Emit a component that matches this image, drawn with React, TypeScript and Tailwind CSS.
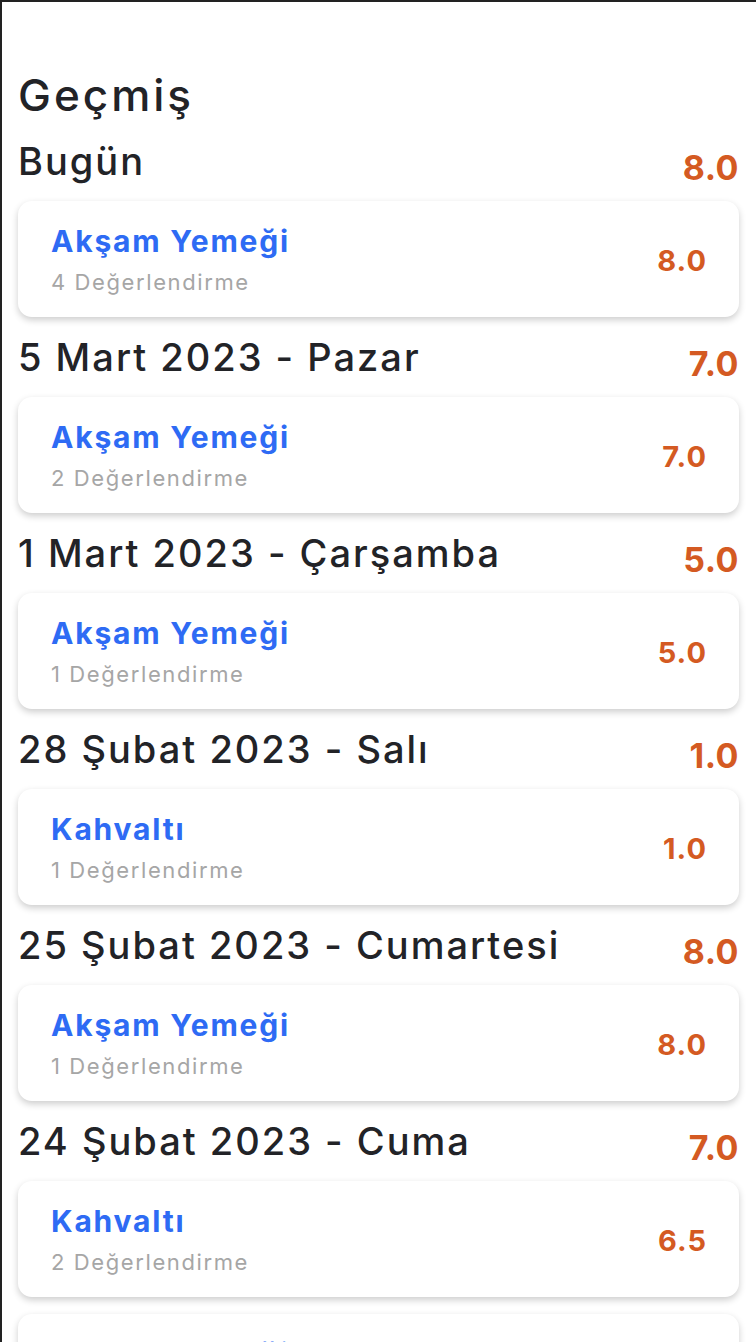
type Meal = { name: string; count: number; score: string };

const days: { date: string; avg: string; meals: Meal[] }[] = [
  { date: "Bugün", avg: "8.0", meals: [{ name: "Akşam Yemeği", count: 4, score: "8.0" }] },
  { date: "5 Mart 2023 - Pazar", avg: "7.0", meals: [{ name: "Akşam Yemeği", count: 2, score: "7.0" }] },
  { date: "1 Mart 2023 - Çarşamba", avg: "5.0", meals: [{ name: "Akşam Yemeği", count: 1, score: "5.0" }] },
  { date: "28 Şubat 2023 - Salı", avg: "1.0", meals: [{ name: "Kahvaltı", count: 1, score: "1.0" }] },
  { date: "25 Şubat 2023 - Cumartesi", avg: "8.0", meals: [{ name: "Akşam Yemeği", count: 1, score: "8.0" }] },
  {
    date: "24 Şubat 2023 - Cuma",
    avg: "7.0",
    meals: [
      { name: "Kahvaltı", count: 2, score: "6.5" },
      { name: "Akşam Yemeği", count: 1, score: "7.5" },
    ],
  },
];

function MealCard({ name, count, score }: Meal) {
  return (
    <div className="bg-white rounded-[14px] shadow-[0_3px_7px_rgba(0,0,0,0.2)] h-[116px] pl-[33px] pr-[32px] flex items-center justify-between">
      <div className="flex flex-col">
        <span className="text-[30px] leading-[40px] font-bold tracking-[1.8px] text-[#2e6bf4]">{name}</span>
        <span className="text-[22px] leading-[30px] tracking-[1.6px] text-[#a6a6a6] mt-[6px]">{count} Değerlendirme</span>
      </div>
      <span className="text-[29px] font-bold tracking-[1px] text-[#d45a22] mt-[4px]">{score}</span>
    </div>
  );
}

export default function App() {
  return (
    <main className="min-h-screen bg-white border-t-2 border-l-2 border-[#222] pl-4 pr-[17px] pt-[64px] font-['Inter',sans-serif] text-[#222327]">
      <h1 className="text-[44px] leading-[58px] font-medium tracking-[3px] mb-[13px]">Geçmiş</h1>
      <div className="flex flex-col gap-[16px]">
        {days.map((d) => (
          <section key={d.date} className="flex flex-col">
            <div className="flex items-center justify-between h-[64px] pb-[16px]">
              <span className="text-[38px] font-medium tracking-[2px]">{d.date}</span>
              <span className="text-[34px] font-bold tracking-[0.5px] text-[#d45a22] mt-[12px]">{d.avg}</span>
            </div>
            <div className="flex flex-col gap-[17px]">
              {d.meals.map((m, i) => (
                <MealCard key={i} {...m} />
              ))}
            </div>
          </section>
        ))}
      </div>
    </main>
  );
}
